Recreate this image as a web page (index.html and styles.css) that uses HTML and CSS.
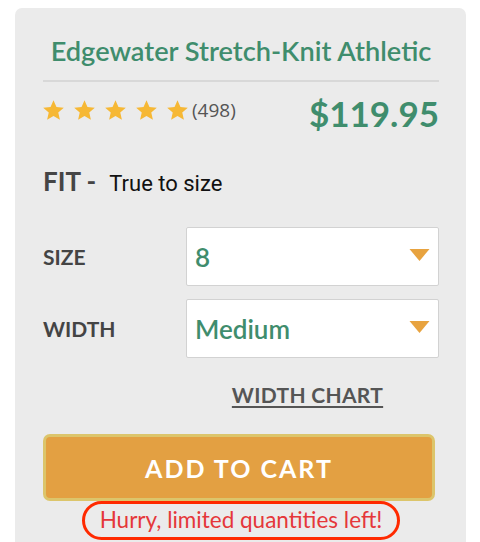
FILE: index.html
```html
<!DOCTYPE html>
<html>
<head>
<meta charset="utf-8">
<link rel="stylesheet" href="styles.css">
</head>
<body>
<div class="card">
  <h1 class="title">Edgewater Stretch-Knit Athletic</h1>
  <div class="divider"></div>
  <div class="rating-row">
    <div class="rating">
      <span class="stars">
        <svg class="star" viewBox="1 1.5 22 20.5"><path d="M12 1.5l3.1 7.1 7.7.7-5.8 5.1 1.7 7.6L12 18l-6.7 4 1.7-7.6L1.2 9.3l7.7-.7z"/></svg>
        <svg class="star" viewBox="1 1.5 22 20.5"><path d="M12 1.5l3.1 7.1 7.7.7-5.8 5.1 1.7 7.6L12 18l-6.7 4 1.7-7.6L1.2 9.3l7.7-.7z"/></svg>
        <svg class="star" viewBox="1 1.5 22 20.5"><path d="M12 1.5l3.1 7.1 7.7.7-5.8 5.1 1.7 7.6L12 18l-6.7 4 1.7-7.6L1.2 9.3l7.7-.7z"/></svg>
        <svg class="star" viewBox="1 1.5 22 20.5"><path d="M12 1.5l3.1 7.1 7.7.7-5.8 5.1 1.7 7.6L12 18l-6.7 4 1.7-7.6L1.2 9.3l7.7-.7z"/></svg>
        <svg class="star" viewBox="1 1.5 22 20.5"><path d="M12 1.5l3.1 7.1 7.7.7-5.8 5.1 1.7 7.6L12 18l-6.7 4 1.7-7.6L1.2 9.3l7.7-.7z"/></svg>
      </span>
      <span class="count">(498)</span>
    </div>
    <div class="price">$119.95</div>
  </div>
  <div class="fit">
    <span class="fit-label">FIT -</span>
    <span class="fit-value">True to size</span>
  </div>
  <div class="option">
    <span class="opt-label">SIZE</span>
    <div class="select">
      <span class="sel-value">8</span>
      <svg class="caret" viewBox="0 0 20 12"><path d="M0 0h20L10 12z"/></svg>
    </div>
  </div>
  <div class="option">
    <span class="opt-label">WIDTH</span>
    <div class="select">
      <span class="sel-value">Medium</span>
      <svg class="caret" viewBox="0 0 20 12"><path d="M0 0h20L10 12z"/></svg>
    </div>
  </div>
  <div class="chart-row"><a class="chart-link">WIDTH CHART</a></div>
  <button class="cart-btn">ADD TO CART</button>
  <div class="hurry-row"><span class="hurry">Hurry, limited quantities left!</span></div>
</div>
</body>
</html>
```
FILE: styles.css
```css
html, body {
  margin: 0;
  padding: 0;
  background: #ffffff;
}
body {
  font-family: Lato, "Liberation Sans", sans-serif;
}
.card {
  margin: 8px 14px 0 15px;
  width: 451px;
  height: 534px;
  overflow: hidden;
  box-sizing: border-box;
  padding: 27px 27px 0 28px;
  background: #ebebeb;
  border-radius: 7px 7px 0 0;
}
.title {
  margin: 0;
  font-size: 27.2px;
  line-height: 32px;
  font-weight: 600;
  color: #3f8d6d;
  text-align: center;
}
.divider {
  margin-top: 13px;
  height: 2px;
  background: #d8d8d8;
}
.rating-row {
  display: flex;
  justify-content: space-between;
  align-items: flex-start;
  margin-top: 9px;
}
.rating {
  display: flex;
  align-items: center;
  margin-top: 8px;
}
.stars {
  display: flex;
  gap: 10px;
}
.star {
  width: 21px;
  height: 20px;
  fill: #f6b835;
  display: block;
}
.count {
  margin-left: 4px;
  font-family: "Open Sans", sans-serif;
  font-size: 19px;
  color: #555;
  line-height: 22px;
}
.price {
  font-size: 35px;
  line-height: 44px;
  font-weight: 700;
  color: #3f8d6d;
}
.fit {
  display: flex;
  align-items: baseline;
  margin-top: 30px;
}
.fit-label {
  font-size: 26px;
  font-weight: 700;
  color: #454545;
  line-height: 32px;
}
.fit-value {
  margin-left: 13px;
  font-family: Roboto, sans-serif;
  font-size: 22px;
  color: #111;
}
.option {
  display: flex;
  align-items: center;
  margin-top: 30px;
}
.option + .option {
  margin-top: 13px;
}
.opt-label {
  width: 143px;
  font-size: 21px;
  font-weight: 700;
  color: #444;
}
.select {
  flex: 1;
  height: 59px;
  box-sizing: border-box;
  background: #fff;
  border: 1px solid #d2d2d2;
  border-radius: 2px;
  display: flex;
  align-items: center;
  justify-content: space-between;
  padding: 0 8px 0 8px;
}
.sel-value {
  font-size: 26px;
  font-weight: 600;
  color: #3f8d6d;
}
.caret {
  width: 21px;
  height: 12px;
  fill: #e8a33f;
  margin-top: -4px;
}
.chart-row {
  display: flex;
  justify-content: center;
  padding-left: 133px;
  margin-top: 24px;
}
.chart-link {
  font-size: 21px;
  font-weight: 700;
  color: #555;
  text-decoration: underline;
  text-decoration-thickness: 2px;
  text-underline-offset: 3px;
  letter-spacing: 0.3px;
}
.cart-btn {
  display: block;
  margin-top: 27px;
  width: 392px;
  height: 67px;
  background: #e3a042;
  border: 3px solid #dcc56b;
  border-radius: 7px;
  color: #fff;
  font-family: Lato, sans-serif;
  font-size: 25px;
  font-weight: 700;
  letter-spacing: 2px;
}
.hurry-row {
  display: flex;
  justify-content: center;
  margin-top: 0;
}
.hurry {
  display: inline-block;
  border: 3.5px solid #ff2a00;
  border-radius: 20px;
  padding: 1px 15px 2px;
  font-size: 22.5px;
  color: #e5373a;
  line-height: 30px;
}
```
